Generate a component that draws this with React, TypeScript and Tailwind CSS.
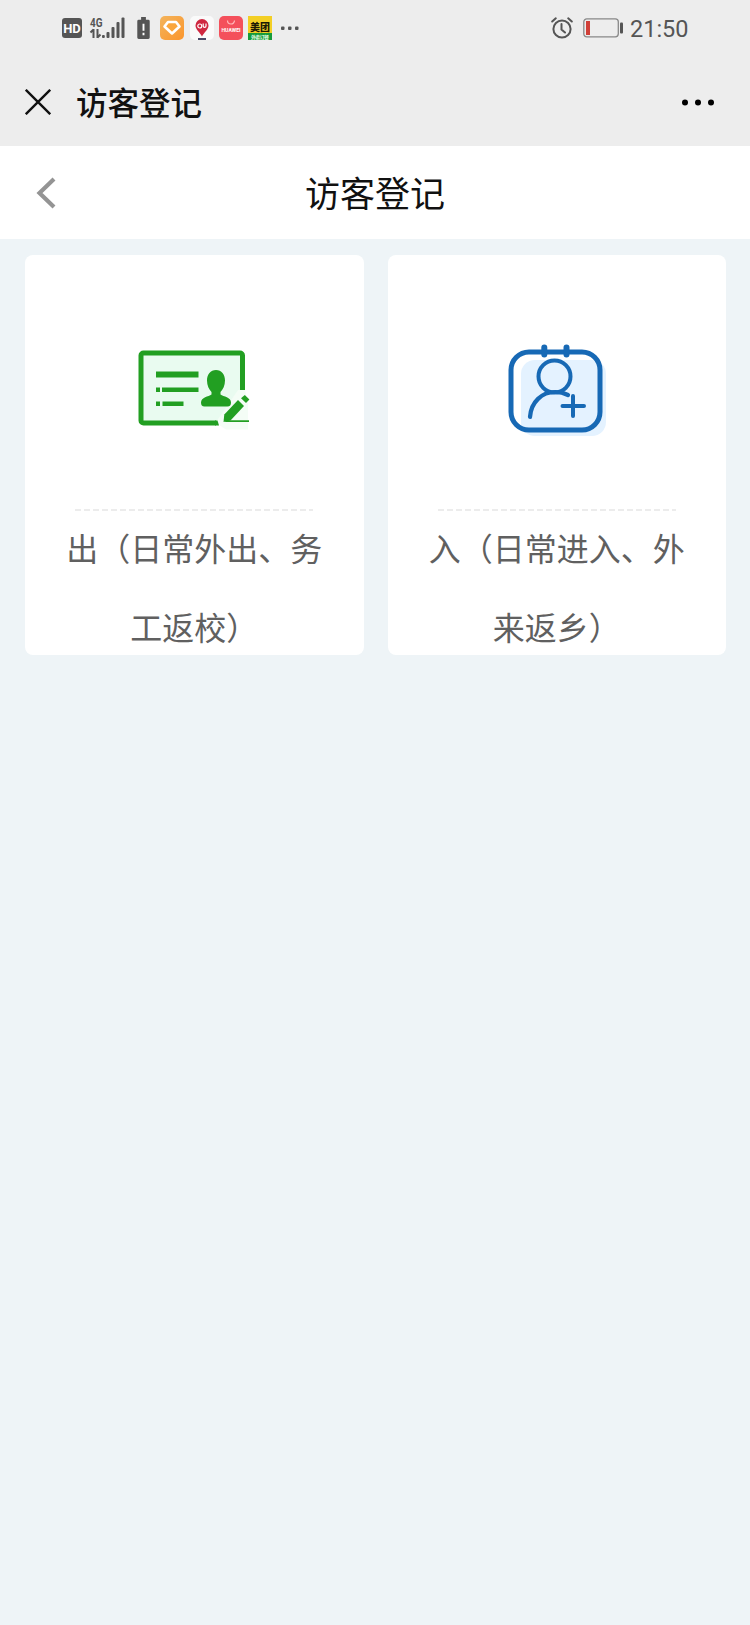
import React from 'react';

const GREEN = '#229f22';
const BLUE = '#1769b5';

const StatusBar: React.FC = () => (
  <div className="h-14 flex items-center justify-between pl-[62px] pr-[62px] text-[#555]">
    <div className="flex items-center">
      <div className="w-5 h-5 rounded-[3px] bg-[#555] flex items-center justify-center text-[13px] leading-none font-bold text-white font-['Roboto',sans-serif]">
        HD
      </div>

      {/* Mobile signal */}
      <svg className="ml-[7px]" width="37" height="24" viewBox="0 0 37 24" fill="#555">
        <text x="1" y="10.5" fontSize="12" fontWeight="700" fontFamily="Roboto, sans-serif" textLength="12.5" lengthAdjust="spacingAndGlyphs">4G</text>
        <path d="M4.500 13v9M1.500 16.500l3-3M8.500 13v9M8.500 21.500l3-3" stroke="#555" strokeWidth="2" fill="none" />
        <rect x="13" y="19" width="2.800" height="3" rx="1" />
        <rect x="17.500" y="16" width="3" height="6" rx="1" />
        <rect x="22.500" y="11" width="3" height="11" rx="1" />
        <rect x="27.500" y="6" width="3" height="16" rx="1" />
        <rect x="32.500" y="1.500" width="3" height="20.500" rx="1" />
      </svg>

      {/* Low battery notice */}
      <svg className="ml-[11px]" width="13" height="22" viewBox="0 0 13 23">
        <path d="M4 0h5v3h2.500a1.500 1.500 0 0 1 1.500 1.500v17A1.500 1.500 0 0 1 11.500 23h-10A1.500 1.500 0 0 1 0 21.500v-17A1.500 1.500 0 0 1 1.500 3H4z" fill="#555" />
        <path d="M6.500 7v7.500M6.500 16.500v2.500" stroke="#fff" strokeWidth="2" />
      </svg>

      {/* Notification app icons */}
      <svg className="ml-[10px]" width="24" height="24" viewBox="0 0 24 24">
        <defs>
          <linearGradient id="gem" x1="0" y1="0" x2="1" y2="1">
            <stop offset="0" stopColor="#f3b45c" />
            <stop offset="1" stopColor="#fb952c" />
          </linearGradient>
        </defs>
        <rect width="24" height="24" rx="5" fill="url(#gem)" />
        <path d="M8 6h8l3.500 4.500-7.500 7-7.500-7z" fill="#faa63d" stroke="#fff" strokeWidth="2.600" strokeLinejoin="round" />
      </svg>
      <svg className="ml-[6px]" width="24" height="24" viewBox="0 0 24 24">
        <rect width="24" height="24" rx="5" fill="#fafafa" />
        <path d="M12 3a6.500 6.500 0 0 1 6.500 6.500c0 4-4.500 7-6.500 11-2-4-6.500-7-6.500-11A6.500 6.500 0 0 1 12 3z" fill="#cf2740" />
        <circle cx="9.800" cy="10" r="2" stroke="#fff" strokeWidth="1.200" fill="none" />
        <path d="M13.200 7.500V10a1.400 1.400 0 0 0 2.800 0V7.500" stroke="#fff" strokeWidth="1.200" fill="none" />
        <path d="M8 23h8" stroke="#4a4a68" strokeWidth="2" />
      </svg>
      <svg className="ml-[5px]" width="24" height="24" viewBox="0 0 24 24">
        <rect width="24" height="24" rx="5" fill="#f4505b" />
        <path d="M8.500 4.500a3.500 3.500 0 0 0 7 0" stroke="#fbb" strokeWidth="1.200" fill="none" />
        <text x="2.500" y="16" fontSize="5.500" fontWeight="700" fill="#fff" fontFamily="Roboto, sans-serif" textLength="19" lengthAdjust="spacingAndGlyphs">HUAWEI</text>
      </svg>
      <svg className="ml-[5px]" width="24" height="24" viewBox="0 0 24 24">
        <rect width="24" height="24" fill="#f3cf25" />
        <rect y="17" width="24" height="7" fill="#169b3a" />
        <text x="2" y="14.500" fontSize="10.500" fontWeight="900" fill="#1c1a05" fontFamily="'Noto Sans CJK SC', sans-serif" textLength="20" lengthAdjust="spacingAndGlyphs">美团</text>
        <text x="3" y="22.600" fontSize="5" fontWeight="700" fill="#e6ffe6" fontFamily="'Noto Sans CJK SC', sans-serif" textLength="18">外卖订餐</text>
      </svg>
      <svg className="ml-[9px]" width="18" height="4" viewBox="0 0 18 4" fill="#555">
        <rect x="0" y="0.500" width="3.500" height="3.500" rx="1" />
        <rect x="7" y="0.500" width="3.500" height="3.500" rx="1" />
        <rect x="14" y="0.500" width="3.500" height="3.500" rx="1" />
      </svg>
    </div>

    <div className="flex items-center">
      <svg width="22" height="22" viewBox="0 0 22 22" fill="none" stroke="#555" strokeWidth="2" strokeLinecap="round">
        <circle cx="11" cy="12" r="8.600" />
        <path d="M10.500 7v5.500l3.500 3M1.200 4.500 4.800 1.300M20.800 4.500l-3.600-3.200" />
      </svg>
      <svg className="ml-[10px]" width="41" height="20" viewBox="0 0 41 20">
        <rect x="0.800" y="0.800" width="34.500" height="18" rx="3" fill="none" stroke="#888" strokeWidth="1.300" />
        <rect x="3" y="3" width="4" height="14" fill="#d04038" />
        <rect x="37" y="4.500" width="3" height="11" rx="1" fill="#555" />
      </svg>
      <span className="ml-[6px] w-[58px] pt-[3px] whitespace-nowrap text-[23.5px] leading-none font-['Roboto',sans-serif]">21:50</span>
    </div>
  </div>
);

const BadgeIcon: React.FC = () => (
  <svg className="ml-[3px]" width="150" height="120" viewBox="0 0 150 120">
    <rect x="20" y="23" width="101" height="70" fill="#e9fbf0" />
    <path d="M121.500 60V25.500a2.500 2.500 0 0 0-2.500-2.500H22.500a2.500 2.500 0 0 0-2.500 2.500v65a2.500 2.500 0 0 0 2.500 2.500H95" fill="none" stroke={GREEN} strokeWidth="5" />
    <path d="m96 90.500 3 5 6 4h22V72l-3-12h-7z" fill="#f4fdf6" />
    <path d="M94 90.500h2.500l1.500 5h-4z" fill={GREEN} />
    <g fill={GREEN}>
      <rect x="119" y="56" width="5" height="4" />
      <rect x="35" y="41.500" width="42.500" height="6" />
      <rect x="35" y="57.500" width="4" height="4.500" />
      <rect x="41" y="57.500" width="36.500" height="4.500" />
      <rect x="35" y="71.500" width="4" height="4.500" />
      <rect x="41.500" y="71.500" width="21" height="4.500" />
      <path d="M95 40c5.500 0 9 4.500 9 10.500 0 5-2 9-4.500 11.500v2.500c3 2.200 10.500 2.500 10.500 8 0 2.500-1 4-3.500 4h-23c-2.500 0-3.500-1.500-3.500-4 0-5.500 7.500-5.800 10.500-8V62C88 59.500 86 55.500 86 50.500 86 44.500 89.500 40 95 40z" />
      <path d="M117 70l6 6L109.500 90.500l-7 1.500.8-7.500z" />
      <path d="m123.800 65 4.600 4.500-3.400 3.500-5-4.700z" />
      <path d="M105 90.200h23v1.700h-24z" />
    </g>
  </svg>
);

const AddVisitorIcon: React.FC = () => (
  <svg className="mr-[3px]" width="130" height="120" viewBox="0 0 130 120" fill="none" stroke={BLUE}>
    <rect x="31" y="30" width="85" height="76" rx="14" fill="#e4f2ff" stroke="none" />
    <rect x="21" y="22" width="89" height="78" rx="18" strokeWidth="5" />
    <path d="M54.300 17.500v7M76.500 17.500v7" strokeWidth="6" strokeLinecap="round" />
    <circle cx="64.500" cy="46.500" r="16" strokeWidth="4" />
    <path d="M40 87c1-15 12-25 25-25 5 0 9 1 13 3" strokeWidth="4.200" strokeLinecap="round" />
    <path d="M83 66v20M72.500 76H94" strokeWidth="4" strokeLinecap="round" />
  </svg>
);

interface EntryCardProps {
  icon: React.ReactNode;
  lines: string[];
}

const EntryCard: React.FC<EntryCardProps> = ({ icon, lines }) => (
  <div className="flex-1 h-[400px] rounded-lg bg-white flex flex-col items-center">
    <div className="h-[254px] w-full flex justify-center pt-[75px]">{icon}</div>
    <svg width="238" height="2" viewBox="0 0 238 2">
      <path d="M0 1h238" stroke="#ececec" strokeWidth="2" strokeDasharray="6 3" />
    </svg>
    <div className="h-[144px] -mt-[3px] text-center text-[32px] leading-[79px] text-[#606060] font-['Noto_Sans_CJK_SC',sans-serif]">
      {lines.map((line) => (
        <p key={line} className="whitespace-nowrap">{line}</p>
      ))}
    </div>
  </div>
);

export default function App() {
  return (
    <div className="w-[750px] h-[1625px] overflow-hidden bg-[#eef4f7] font-['Noto_Sans_CJK_SC',sans-serif]">
      <div className="h-[146px] bg-[#ededed]">
        <StatusBar />
        <div className="h-[92px] flex items-center pl-[25px] pr-[36px]">
          <svg width="26" height="26" viewBox="0 0 26 26" stroke="#111" strokeWidth="2.400">
            <path d="m.800.800 24.400 24.400M25.200.800.800 25.200" />
          </svg>
          <h1 className="ml-[25px] text-[31.500px] leading-none font-medium text-[#111]">访客登记</h1>
          <svg className="ml-auto" width="33" height="8" viewBox="0 0 33 8" fill="#000">
            <circle cx="4" cy="4.500" r="3" />
            <circle cx="17" cy="4.500" r="3" />
            <circle cx="30" cy="4.500" r="3" />
          </svg>
        </div>
      </div>

      <header className="h-[93px] bg-white grid grid-cols-[1fr_auto_1fr] items-center px-[36px]">
        <svg width="20" height="32" viewBox="0 0 20 32" fill="none" stroke="#949494" strokeWidth="4.200">
          <path d="M18 2 3.500 16 18 30" />
        </svg>
        <h2 className="-mt-0.5 text-[35px] leading-none text-[#111]">访客登记</h2>
      </header>

      <main className="flex gap-6 pl-[25px] pr-6 pt-4">
        <EntryCard icon={<BadgeIcon />} lines={['出（日常外出、务', '工返校）']} />
        <EntryCard icon={<AddVisitorIcon />} lines={['入（日常进入、外', '来返乡）']} />
      </main>
    </div>
  );
}
